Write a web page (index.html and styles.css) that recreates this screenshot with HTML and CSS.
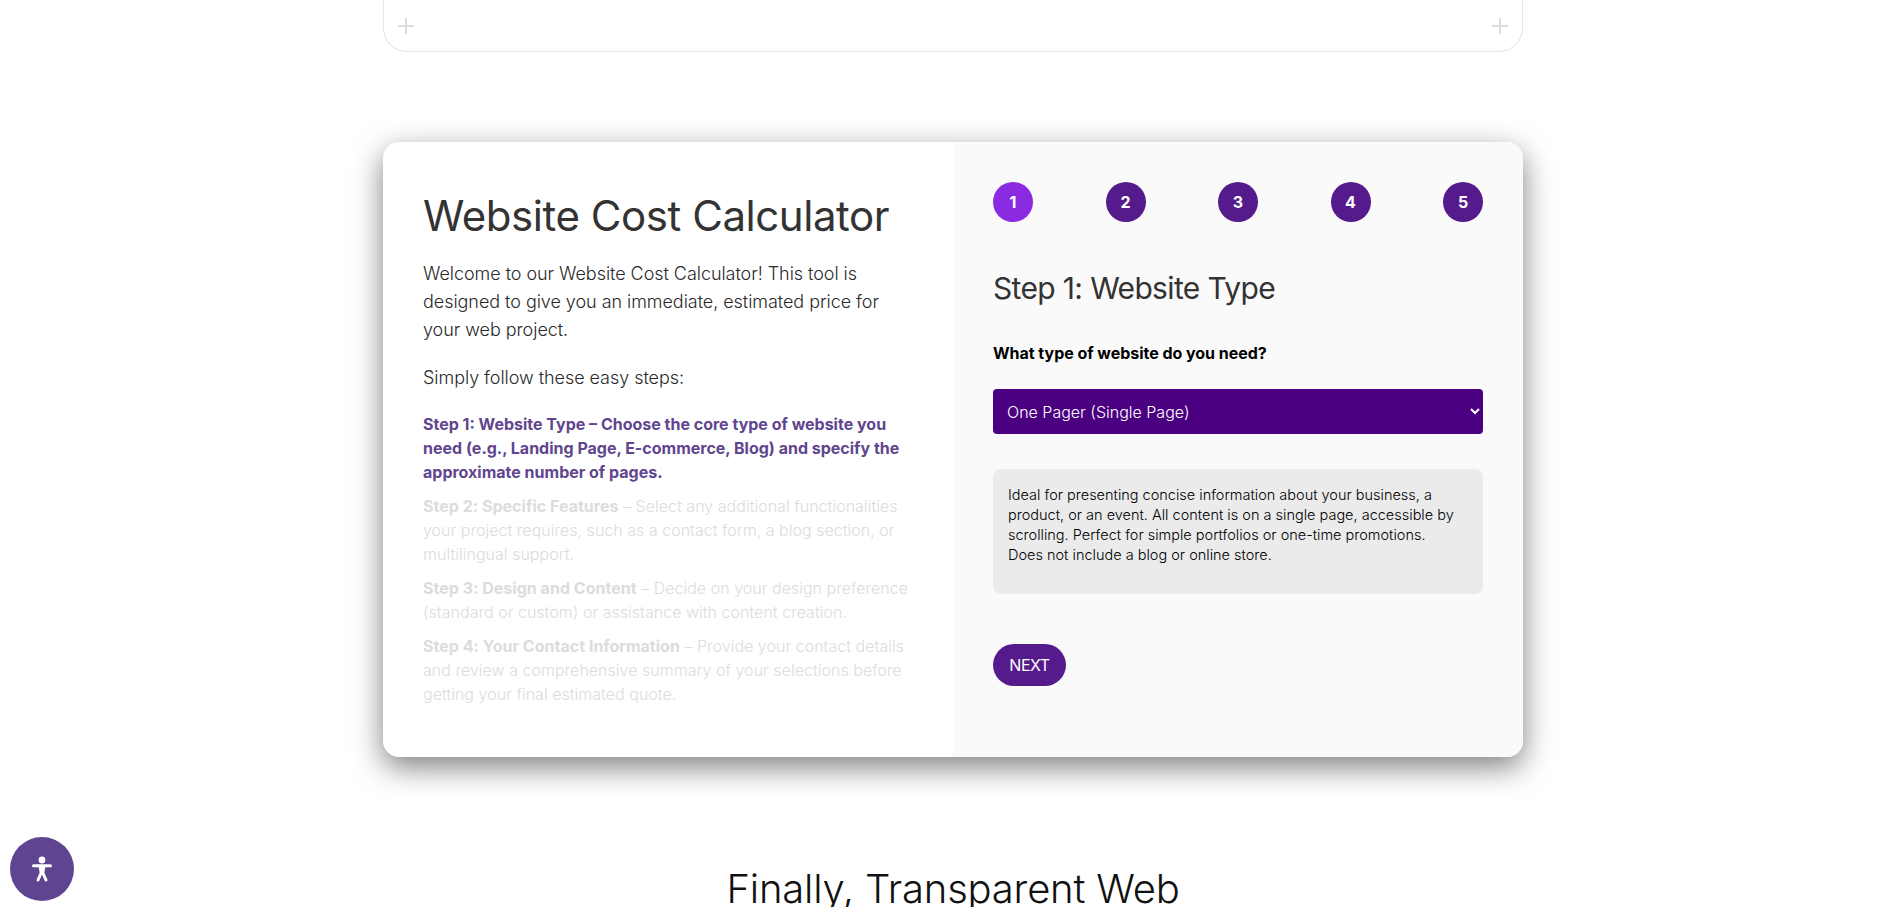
FILE: index.html
```html
<!DOCTYPE html>
<html lang="en">
  <head>
    <meta charset="UTF-8" />
    <title>Website Cost Calculator</title>
    <link rel="stylesheet" href="styles.css">
  </head>
  <body>
    <div class="top-card">
      <span class="plus"></span>
      <span class="plus"></span>
    </div>

    <section class="calculator">
      <div class="intro">
        <h1>Website Cost Calculator</h1>
        <p class="lead">Welcome to our Website Cost Calculator! This tool is designed to give you an immediate, estimated price for your web project.</p>
        <p class="lead">Simply follow these easy steps:</p>
        <ul class="steps">
          <li class="current"><strong>Step 1: Website Type</strong> – Choose the core type of website you need (e.g., Landing Page, E-commerce, Blog) and specify the approximate number of pages.</li>
          <li><strong>Step 2: Specific Features</strong> – Select any additional functionalities your project requires, such as a contact form, a blog section, or multilingual support.</li>
          <li><strong>Step 3: Design and Content</strong> – Decide on your design preference (standard or custom) or assistance with content creation.</li>
          <li><strong>Step 4: Your Contact Information</strong> – Provide your contact details and review a comprehensive summary of your selections before getting your final estimated quote.</li>
        </ul>
      </div>

      <form class="wizard">
        <div class="dots">
          <span class="dot active">1</span>
          <span class="dot">2</span>
          <span class="dot">3</span>
          <span class="dot">4</span>
          <span class="dot">5</span>
        </div>
        <h2>Step 1: Website Type</h2>
        <label for="type">What type of website do you need?</label>
        <select id="type">
          <option>One Pager (Single Page)</option>
          <option>Landing Page</option>
          <option>E-commerce</option>
          <option>Blog</option>
        </select>
        <div class="desc">Ideal for presenting concise information about your business, a product, or an event. All content is on a single page, accessible by scrolling. Perfect for simple portfolios or one-time promotions. Does not include a blog or online store.</div>
        <button type="button" class="next">NEXT</button>
      </form>
    </section>

    <h2 class="finally">Finally, Transparent Web</h2>

    <button type="button" class="a11y" aria-label="Accessibility">
      <svg width="24" height="26" viewBox="0 0 24 26">
        <circle cx="12" cy="4" r="3.4" fill="#fff" />
        <path d="M3.5 9.8 H20.5 M12 9.8 V15 M12 15 L8 24 M12 15 L16 24" fill="none" stroke="#fff" stroke-width="3" stroke-linecap="round" stroke-linejoin="round" />
        <path d="M8.5 9.8 H15.5 L14.4 16.5 H9.6 Z" fill="#fff" />
      </svg>
    </button>
  </body>
</html>
```

FILE: styles.css
```css
html,
body {
  height: 907px;
  overflow: hidden;
}
body {
  box-sizing: border-box;
  font-family: Inter, "Noto Sans", sans-serif;
  margin: 0;
  padding-left: 5px;
  background-color: #fff;
  color: #2a2a2a;
}
.top-card {
  box-sizing: border-box;
  width: 1140px;
  height: 52px;
  margin: 0 auto;
  padding: 0 14px 17px;
  display: flex;
  justify-content: space-between;
  align-items: flex-end;
  border: 1px solid #e6e6e6;
  border-top: none;
  border-radius: 0 0 24px 24px;
}
.plus {
  width: 16px;
  height: 16px;
  background:
    linear-gradient(#dcdce0, #dcdce0) center / 100% 2px no-repeat,
    linear-gradient(#dcdce0, #dcdce0) center / 2px 100% no-repeat;
}
.calculator {
  width: 1140px;
  height: 615px;
  margin: 90px auto 0;
  display: flex;
  border-radius: 16px;
  box-shadow: 0 10px 30px rgba(0, 0, 0, 0.5);
  background-color: #fff;
  overflow: hidden;
}
.intro {
  box-sizing: border-box;
  width: 570px;
  padding: 40px;
}
.intro h1 {
  margin: 4px 0 14px;
  font-size: 42px;
  line-height: 60px;
  font-weight: 400;
  letter-spacing: -0.45px;
  color: #333;
}
.lead {
  margin: 0 0 20px;
  font-size: 18px;
  line-height: 28px;
  font-weight: 300;
  letter-spacing: -0.05px;
}
.steps {
  list-style: none;
  margin: 20px 0 0;
  padding: 0;
}
.steps li {
  margin-bottom: 10px;
  font-size: 16px;
  line-height: 24px;
  font-weight: 300;
  letter-spacing: 0.02px;
  color: #dcdcdc;
}
.steps strong {
  font-weight: 700;
}
.steps li.current {
  color: #60458f;
  font-weight: 700;
  letter-spacing: 0;
}
.wizard {
  box-sizing: border-box;
  width: 570px;
  padding: 40px;
  background-color: #fafafa;
}
.dots {
  display: flex;
  justify-content: space-between;
}
.dot {
  width: 40px;
  height: 40px;
  border-radius: 50%;
  display: flex;
  align-items: center;
  justify-content: center;
  background-color: #551a8b;
  color: #fff;
  font-size: 16px;
  font-weight: 700;
}
.dot.active {
  background-color: #8a2be2;
}
.wizard h2 {
  margin: 46px 0 0;
  font-size: 30px;
  line-height: 40px;
  font-weight: 400;
  letter-spacing: -0.65px;
  color: #333;
}
.wizard label {
  display: block;
  margin-top: 33px;
  font-size: 16px;
  line-height: 24px;
  font-weight: 700;
  letter-spacing: -0.03px;
  color: #000;
}
.wizard select {
  display: block;
  width: 100%;
  height: 45px;
  margin-top: 24px;
  padding: 0 10px;
  border: none;
  border-radius: 4px;
  background-color: #4b0082;
  color: #fff;
  font-family: inherit;
  font-size: 16px;
  font-weight: 300;
  letter-spacing: 0;
}
.desc {
  box-sizing: border-box;
  height: 125px;
  margin-top: 35px;
  padding: 16px 23px 16px 15px;
  border-radius: 8px;
  background-color: #ebebeb;
  color: #000;
  font-size: 14.5px;
  line-height: 20px;
  font-weight: 300;
  letter-spacing: 0;
}
.next {
  display: block;
  width: 73px;
  height: 42px;
  margin-top: 50px;
  padding: 0;
  border: none;
  border-radius: 21px;
  background-color: #551a8b;
  color: #fff;
  font-family: inherit;
  font-size: 16px;
  font-weight: 400;
  letter-spacing: -0.5px;
}
.finally {
  margin: 102px 0 0;
  text-align: center;
  font-size: 40px;
  line-height: 60px;
  font-weight: 300;
  letter-spacing: -0.2px;
  color: #111;
}
.a11y {
  position: fixed;
  left: 10px;
  bottom: 6px;
  width: 64px;
  height: 64px;
  padding: 0;
  border: none;
  border-radius: 50%;
  background-color: #5f4491;
  display: flex;
  align-items: center;
  justify-content: center;
}
```
